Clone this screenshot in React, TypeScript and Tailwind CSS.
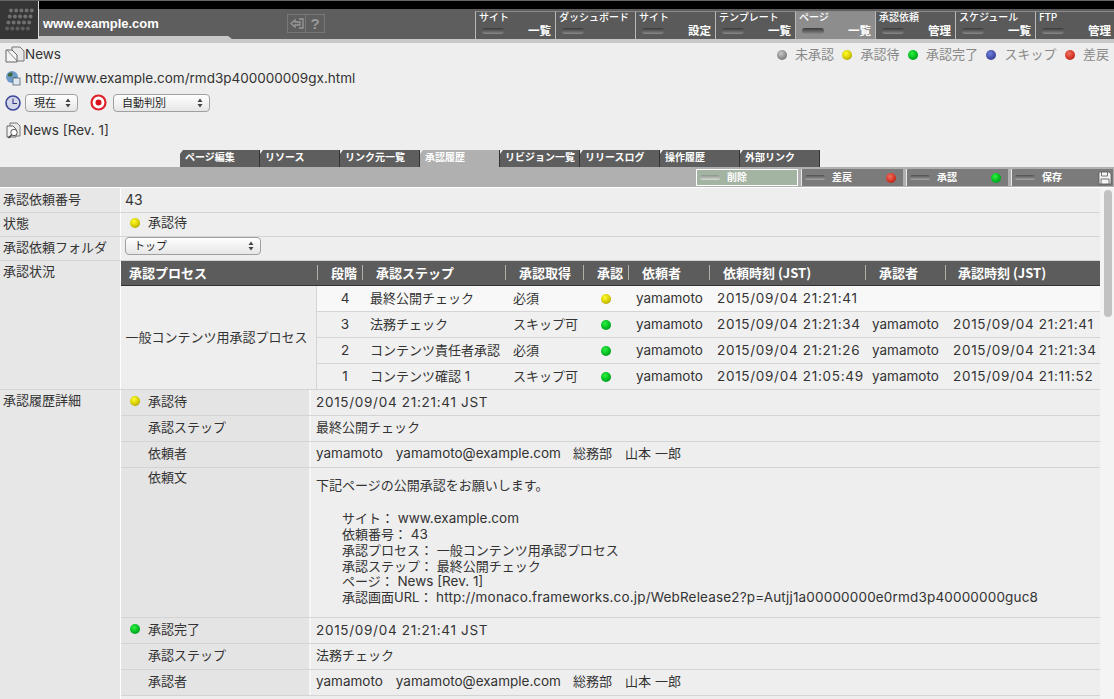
import React from "react";

const Dot = ({ c, className = "" }: { c: "gray" | "yellow" | "green" | "blue" | "red"; className?: string }) => {
  const map = {
    gray: "bg-[radial-gradient(circle_at_40%_35%,#c8c8c8,#777_75%)]",
    yellow: "bg-[radial-gradient(circle_at_40%_35%,#ffff30,#d4c800_55%,#807800)]",
    green: "bg-[radial-gradient(circle_at_40%_35%,#30f040,#00b820_55%,#007a20)]",
    blue: "bg-[radial-gradient(circle_at_40%_35%,#7080e0,#404aa0_60%,#303880)]",
    red: "bg-[radial-gradient(circle_at_40%_35%,#f07060,#d03020_60%,#902018)]",
  };
  return <span className={`inline-block w-[10px] h-[10px] rounded-full shrink-0 ${map[c]} ${className}`} />;
};

const Led = ({ className }: { className: string }) => (
  <span className={`inline-block rounded-full bg-gradient-to-b shrink-0 ${className}`} />
);

const navItems = [
  ["サイト", "一覧"],
  ["ダッシュボード", ""],
  ["サイト", "設定"],
  ["テンプレート", "一覧"],
  ["ページ", "一覧"],
  ["承認依頼", "管理"],
  ["スケジュール", "一覧"],
  ["FTP", "管理"],
];

const tabs = ["ページ編集", "リソース", "リンク元一覧", "承認履歴", "リビジョン一覧", "リリースログ", "操作履歴", "外部リンク"];

const legend: [any, string][] = [
  ["gray", "未承認"],
  ["yellow", "承認待"],
  ["green", "承認完了"],
  ["blue", "スキップ"],
  ["red", "差戻"],
];

const Logo = () => (
  <svg width="38" height="38" viewBox="0 0 38 38">
    <rect width="38" height="38" fill="#363636" />
    {[0, 1, 2, 3].map((r) =>
      [0, 1, 2, 3, 4].map((c) => (
        <circle key={`${r}${c}`} cx={11 + c * 5.2 - r * 1.3} cy={9.5 + r * 6} r="2" fill={r === 3 ? "#5e5e5e" : "#707070"} />
      ))
    )}
  </svg>
);

const PageIcon = () => (
  <svg width="20" height="17" viewBox="0 0 20 17" className="shrink-0">
    <path d="M7 1h8l4 4v10H7z" fill="#e8e8e8" stroke="#777" />
    <path d="M1 4h6l5 5v7H1z" fill="#f4f4f4" stroke="#666" />
    <path d="M2 4l10 11" stroke="#888" />
  </svg>
);

const GlobeIcon = () => (
  <svg width="16" height="16" viewBox="0 0 16 16" className="shrink-0">
    <circle cx="7" cy="7" r="6" fill="#6f9bc8" />
    <path d="M3 4c2-2 4-2 5 0l-2 3-3-1zM8 8l3-1 1 2-3 3z" fill="#3c6a3c" />
    <rect x="8" y="8" width="7" height="7" fill="#dfe7ef" stroke="#567" strokeWidth="0.8" />
  </svg>
);

const ClockIcon = () => (
  <svg width="16" height="16" viewBox="0 0 16 16" className="shrink-0">
    <circle cx="8" cy="8" r="7" fill="#d4d6ea" stroke="#3c4699" strokeWidth="1.6" />
    <path d="M8 3.5V8.5H12" fill="none" stroke="#333a80" strokeWidth="1.1" />
  </svg>
);

const TargetIcon = () => (
  <svg width="17" height="17" viewBox="0 0 17 17" className="shrink-0">
    <circle cx="8.5" cy="8.5" r="7" fill="#fff" stroke="#e0202a" strokeWidth="2.2" />
    <circle cx="8.5" cy="8.5" r="3" fill="#d8101c" />
  </svg>
);

const RevIcon = () => (
  <svg width="17" height="17" viewBox="0 0 17 17" className="shrink-0">
    <path d="M5 1h7l3 3v10H5z" fill="#e8e8e8" stroke="#777" />
    <path d="M2 4h6l3 3v8H2z" fill="#f4f4f4" stroke="#666" />
    <circle cx="9" cy="10.5" r="3.2" fill="#fff" stroke="#555" />
    <path d="M6.5 13L3.5 16" stroke="#444" strokeWidth="1.6" />
  </svg>
);

const Arrows = () => (
  <svg width="6" height="10" viewBox="0 0 6 10" className="shrink-0">
    <path d="M3 0.5L5.5 4H0.5zM3 9.5L0.5 6h5z" fill="#444" />
  </svg>
);

const Select = ({ label, w }: { label: string; w: string }) => (
  <span
    className={`inline-flex items-center justify-between h-[18px] pl-2 pr-[6px] rounded-[4px] border border-[#a0a0a0] bg-gradient-to-b from-white to-[#e6e6e6] text-[11px] text-[#222] ${w}`}
  >
    <span className="pt-[1px]">{label}</span>
    <Arrows />
  </span>
);

const L = ({ children }: { children: React.ReactNode }) => (
  <span className="font-['Inter','Liberation_Sans',sans-serif] text-[13.5px]">{children}</span>
);

const D = ({ children }: { children: React.ReactNode }) => (
  <span className="font-['Inter','Liberation_Sans',sans-serif] text-[13.5px] tracking-[0.7px] whitespace-nowrap">{children}</span>
);

const Row = ({ label, h, pt = "pt-[1px]", children }: { label: string; h: string; pt?: string; children: React.ReactNode }) => (
  <div className={`flex border-b border-[#d4d4d4] ${h}`}>
    <div className={`w-[121px] shrink-0 bg-[#e7e7e7] border-r border-white pl-[3px] text-[#333] ${pt}`}>{label}</div>
    <div className="flex-1 min-w-0">{children}</div>
  </div>
);

const statusHead: [string, string][] = [
  ["承認プロセス", "w-[196px] pl-2"],
  ["段階", "w-[45px] pl-[13px]"],
  ["承認ステップ", "w-[143px] pl-[13px]"],
  ["承認取得", "w-[78px] pl-[13px]"],
  ["承認", "w-[45px] pl-[13px]"],
  ["依頼者", "w-[81px] pl-[13px]"],
  ["依頼時刻 (JST)", "w-[156px] pl-[13px]"],
  ["承認者", "w-[80px] pl-[13px]"],
  ["承認時刻 (JST)", "flex-1 pl-[12px]"],
];

const statusRows: [string, string, string, "yellow" | "green", string, string, string, string][] = [
  ["4", "最終公開チェック", "必須", "yellow", "yamamoto", "2015/09/04 21:21:41", "", ""],
  ["3", "法務チェック", "スキップ可", "green", "yamamoto", "2015/09/04 21:21:34", "yamamoto", "2015/09/04 21:21:41"],
  ["2", "コンテンツ責任者承認", "必須", "green", "yamamoto", "2015/09/04 21:21:26", "yamamoto", "2015/09/04 21:21:34"],
  ["1", "コンテンツ確認 1", "スキップ可", "green", "yamamoto", "2015/09/04 21:05:49", "yamamoto", "2015/09/04 21:11:52"],
];

const Detail = ({
  label,
  dot,
  children,
  h = "h-[26px]",
  vt = "pt-[1.5px]",
  lt = "pt-[1.5px]",
}: {
  label: string;
  dot?: "yellow" | "green";
  children: React.ReactNode;
  h?: string;
  vt?: string;
  lt?: string;
}) => (
  <div className={`flex border-b border-[#d4d4d4] ${h}`}>
    <div className={`w-[190px] shrink-0 bg-[#e4e4e4] border-r-2 border-[#f6f6f6] pl-[9px] flex gap-[8px] text-[#333] ${lt}`}>
      <span className="w-[10px] shrink-0 flex items-center h-[19px]">{dot && <Dot c={dot} />}</span>
      <span>{label}</span>
    </div>
    <div className={`flex-1 min-w-0 pl-[5px] text-[#333] ${vt}`}>{children}</div>
  </div>
);

const Person = () => (
  <div className="flex whitespace-nowrap">
    <L>yamamoto</L>
    <span className="ml-[13px]">
      <L>yamamoto@example.com</L>
    </span>
    <span className="ml-[12px]">総務部</span>
    <span className="ml-[13px]">山本</span>
    <span className="ml-[4px]">一郎</span>
  </div>
);

export default function App() {
  return (
    <div className="h-[699px] w-[1114px] overflow-hidden flex flex-col bg-[#eeeeee] text-[13px] leading-[19px] text-[#333] font-['Inter','Noto_Sans_CJK_JP',sans-serif]">
      {/* header */}
      <div className="h-[39px] shrink-0 flex bg-[#5e5e5e] border-t border-[#666]">
        <div className="w-[39px] shrink-0 border-r border-[#ddd] overflow-hidden">
          <Logo />
        </div>
        <div className="flex-1 min-w-0 flex flex-col">
          <div className="h-[8px] bg-black shrink-0" />
          <div className="flex-1 flex min-h-0">
            <div className="w-[436px] shrink-0 flex flex-col">
              <div className="flex-1 flex">
                <div className="w-[248px] shrink-0 pl-[4px] pt-[5px] font-['Liberation_Sans',sans-serif] font-bold text-[13px] text-white">
                  www.example.com
                </div>
                <div className="flex mt-[5px] h-[19px] text-[#8c8c8c]">
                  <span className="w-[19px] border border-[#777] flex items-center justify-center">
                    <svg width="14" height="11" viewBox="0 0 14 11">
                      <path d="M1 5.5L5 2v2h5v3H5v2z M9 1h4v9H9" fill="none" stroke="#999" strokeWidth="1.3" />
                    </svg>
                  </span>
                  <span className="w-[19px] border border-[#777] border-l-0 flex items-center justify-center font-['Liberation_Sans',sans-serif] font-bold text-[15px] text-[#999]">
                    ?
                  </span>
                </div>
              </div>
              <div className="h-[3px] w-[193px] bg-[#c8c8c8] [clip-path:polygon(0_0,98%_0,100%_100%,0_100%)] shrink-0" />
            </div>
            <div className="flex-1 flex min-w-0 pt-[2px]">
              {navItems.map(([top, bottom], i) => (
                <div
                  key={i}
                  className={`w-[80px] shrink-0 border-l border-[#b8b8b8] border-t border-t-[#8a8a8a] pl-[3px] pr-[4px] flex flex-col text-white font-['Noto_Sans_CJK_JP',sans-serif] text-[10px] font-medium ${
                    i === 4 ? "bg-[#8d8d8d] text-[#d8d8d8]" : "bg-[#5a5a5a]"
                  }`}
                >
                  <span className="whitespace-nowrap leading-[10px]">{top}</span>
                  <span className="flex items-center justify-between pl-[3px] h-[13px] mt-[2px]">
                    <Led className="w-[22px] h-[6px] from-[#3a3a3a] to-[#8a8a8a]" />
                    <span className="font-bold text-[11.5px] leading-[13px]">{bottom}</span>
                  </span>
                </div>
              ))}
            </div>
          </div>
        </div>
      </div>
      <div className="h-[4px] bg-[#c8c8c8] shrink-0" />

      {/* page info */}
      <div className="h-[107px] shrink-0 flex flex-col">
        <div className="flex justify-between pl-[5px] pr-[5px] h-[23px] items-center">
          <div className="flex items-center">
            <PageIcon />
            <L>News</L>
          </div>
          <div className="flex items-center text-[#888]">
            {legend.map(([c, t], i) => (
              <span key={i} className="flex items-center gap-[8px] mr-[8.5px] last:mr-0">
                <Dot c={c} />
                {t}
              </span>
            ))}
          </div>
        </div>
        <div className="flex items-center gap-[4px] pl-[5px] h-[24px]">
          <GlobeIcon />
          <L>http://www.example.com/rmd3p400000009gx.html</L>
        </div>
        <div className="flex items-center pl-[5px] h-[25px]">
          <ClockIcon />
          <span className="ml-[4px]">
            <Select label="現在" w="w-[53px]" />
          </span>
          <span className="ml-[12px]">
            <TargetIcon />
          </span>
          <span className="ml-[6px]">
            <Select label="自動判別" w="w-[97px]" />
          </span>
        </div>
        <div className="flex items-center gap-[1px] pl-[5px] h-[26px] mt-[2px]">
          <RevIcon />
          <L>News [Rev. 1]</L>
        </div>
      </div>

      {/* tabs */}
      <div className="h-[17px] shrink-0 flex pl-[180px]">
        {tabs.map((t, i) => (
          <div
            key={t}
            className={`w-[80px] shrink-0 pl-[5px] text-[10px] leading-[14px] font-bold text-white font-['Noto_Sans_CJK_JP',sans-serif] border-r border-[#333] [clip-path:polygon(3px_0,100%_0,100%_100%,0_100%,0_4px)] ${
              i === 3 ? "bg-[#b0b0b0]" : "bg-[#5e5e5e]"
            }`}
          >
            {t}
          </div>
        ))}
      </div>

      {/* toolbar */}
      <div className="h-[21px] shrink-0 bg-[#b0b0b0] flex items-center justify-end gap-[3px] pr-[1px] pt-[1px] border-b border-white text-white text-[10px] font-bold font-['Noto_Sans_CJK_JP',sans-serif]">
        {[
          ["削除", ""],
          ["差戻", "red"],
          ["承認", "green"],
          ["保存", "save"],
        ].map(([t, k], i) => (
          <div
            key={t}
            className={`w-[102px] h-[17px] flex items-center pl-[3px] pr-[1px] ${
              i === 0 ? "bg-[#a3b4a3] border border-white" : "bg-[#7b7b7b] border-l border-[#e8e8e8]"
            }`}
          >
            <Led className={`w-[20px] h-[5px] ${i === 0 ? "from-[#8a948a] to-[#d8dcd8]" : "from-[#505050] to-[#a8a8a8]"}`} />
            <span className={`mb-[2px] ml-[7px] ${i === 0 ? "" : "flex-1"}`}>{t}</span>
            {k === "red" && <Dot c="red" className="mr-[6px]" />}
            {k === "green" && <Dot c="green" className="mr-[6px]" />}
            {k === "save" && (
              <svg width="14" height="14" viewBox="0 0 14 14">
                <path d="M1 1h10l2 2v10H1z" fill="#f4f4f4" stroke="#555" strokeWidth="0.8" />
                <path d="M3.5 1v4h6V1M3 13V8h8v5" fill="none" stroke="#555" strokeWidth="0.8" />
              </svg>
            )}
          </div>
        ))}
      </div>

      {/* body */}
      <div className="flex-1 min-h-0 flex overflow-hidden">
        <div className="w-[1100px] shrink-0">
          <Row label="承認依頼番号" h="h-[25px]" pt="pt-[2px]">
            <div className="pl-[4px] pt-[2px] text-[14px]">
              <span className="font-['Inter',sans-serif] text-[14px]">43</span>
            </div>
          </Row>
          <Row label="状態" h="h-[24px]">
            <div className="pl-[9px] flex items-center gap-[8px]">
              <Dot c="yellow" />
              承認待
            </div>
          </Row>
          <Row label="承認依頼フォルダ" h="h-[24px]">
            <div className="pl-[4px] flex">
              <Select label="トップ" w="w-[136px]" />
            </div>
          </Row>
          <Row label="承認状況" h="h-[129px]">
            <div className="h-[25px] flex items-center pb-[2px] bg-[#5c5c5c] border-b border-b-[#333] text-white font-bold text-[13px] font-['Noto_Sans_CJK_JP',sans-serif]">
              {statusHead.map(([t, w], i) => (
                <div key={i} className={`${w} ${i ? "border-l border-[#aeb2a6]" : ""} h-[15px] leading-[15px] whitespace-nowrap shrink-0`}>
                  {t}
                </div>
              ))}
            </div>
            <div className="flex h-[103px]">
              <div className="w-[196px] shrink-0 flex items-center justify-center pr-[4px] border-r border-[#d4d4d4] bg-[#eee]">
                一般コンテンツ用承認プロセス
              </div>
              <div className="flex-1 min-w-0">
                {statusRows.map((r, i) => (
                  <div
                    key={i}
                    className={`h-[26px] last:h-[25px] flex items-center border-b border-[#d4d4d4] last:border-b-0 ${i === 0 ? "bg-[#f8f8f8]" : "bg-[#f0f0f0]"}`}
                  >
                    <div className="w-[46px] shrink-0 text-center pl-[10px]">
                      <L>{r[0]}</L>
                    </div>
                    <div className="w-[144px] shrink-0 pl-[7px]">{r[1]}</div>
                    <div className="w-[80px] shrink-0 pl-[6px]">{r[2]}</div>
                    <div className="w-[42px] shrink-0 flex pl-[14px]">
                      <Dot c={r[3]} />
                    </div>
                    <div className="w-[81px] shrink-0 pl-[7px]">
                      <L>{r[4]}</L>
                    </div>
                    <div className="w-[155px] shrink-0 pl-[7px]">
                      <D>{r[5]}</D>
                    </div>
                    <div className="w-[81px] shrink-0 pl-[7px]">
                      <L>{r[6]}</L>
                    </div>
                    <div className="flex-1 pl-[7px] whitespace-nowrap">
                      <D>{r[7]}</D>
                    </div>
                  </div>
                ))}
              </div>
            </div>
          </Row>
          <Row label="承認履歴詳細" h="h-[320px]">
            <Detail label="承認待" dot="yellow" vt="pt-[2.5px]">
              <D>2015/09/04 21:21:41 JST</D>
            </Detail>
            <Detail label="承認ステップ">最終公開チェック</Detail>
            <Detail label="依頼者">
              <Person />
            </Detail>
            <Detail label="依頼文" h="h-[150px]" lt="pt-[0px]">
              <div className="pt-[8px] leading-[15.8px]">
                <div className="mb-[18px]">下記ページの公開承認をお願いします。</div>
                <div className="pl-[26px] whitespace-nowrap">
                  <div>
                    サイト： <L>www.example.com</L>
                  </div>
                  <div>
                    依頼番号： <L>43</L>
                  </div>
                  <div>承認プロセス： 一般コンテンツ用承認プロセス</div>
                  <div>承認ステップ： 最終公開チェック</div>
                  <div>
                    ページ： <L>News [Rev. 1]</L>
                  </div>
                  <div>
                    承認画面URL：{" "}
                    <span className="tracking-[0.17px]">
                      <L>http://monaco.frameworks.co.jp/WebRelease2?p=Autjj1a00000000e0rmd3p40000000guc8</L>
                    </span>
                  </div>
                </div>
              </div>
            </Detail>
            <Detail label="承認完了" dot="green" vt="pt-[2.5px]">
              <D>2015/09/04 21:21:41 JST</D>
            </Detail>
            <Detail label="承認ステップ">法務チェック</Detail>
            <Detail label="承認者">
              <Person />
            </Detail>
          </Row>
        </div>
        <div className="flex-1 bg-[#f4f4f4] pl-[4px] pr-[2px] pt-[2px]">
          <div className="h-[127px] rounded-full bg-[#c2c2c2]" />
        </div>
      </div>
    </div>
  );
}
